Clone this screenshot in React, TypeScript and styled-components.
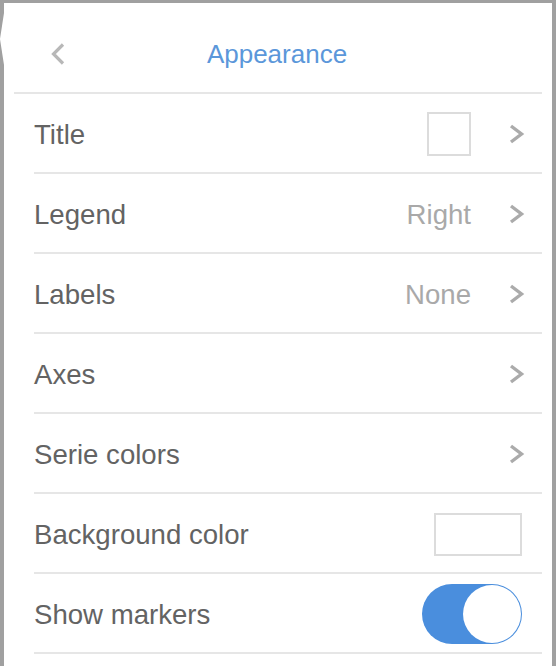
import React from "react";
import styled, { createGlobalStyle } from "styled-components";

const Global = createGlobalStyle`
  html, body { margin: 0; padding: 0; }
  body {
    background: #a0a0a0;
    font-family: "Liberation Sans", Arial, Helvetica, sans-serif;
    overflow: hidden;
  }
`;

const Page = styled.div`
  width: 556px;
  height: 666px;
  padding: 3px 4px 0 4px;
  box-sizing: border-box;
`;

const Panel = styled.div`
  position: relative;
  width: 548px;
  height: 663px;
  background: #fff;
  display: flex;
  flex-direction: column;
`;

const Arrow = styled.div`
  position: absolute;
  left: -4px;
  top: 10px;
  width: 0;
  height: 0;
  border-top: 26px solid transparent;
  border-bottom: 26px solid transparent;
  border-right: 4px solid #fff;
`;

const Header = styled.div`
  height: 89px;
  margin: 0 10px;
  border-bottom: 2px solid #e6e6e6;
  display: flex;
  align-items: center;
  justify-content: center;
  position: relative;
`;

const BackButton = styled.div`
  position: absolute;
  left: 36px;
  top: 39px;
  width: 16px;
  height: 24px;
  display: flex;
  align-items: center;
  justify-content: center;
`;

const HeaderTitle = styled.div`
  font-size: 26px;
  color: #5b97da;
  margin-top: 14px;
  margin-right: 2px;
`;

const List = styled.div`
  display: flex;
  flex-direction: column;
  margin: 0 10px 0 30px;
`;

const Row = styled.div<{ $pr?: number }>`
  height: 78px;
  border-bottom: 2px solid #e6e6e6;
  display: flex;
  align-items: center;
  padding-right: ${(p) => p.$pr ?? 17}px;
`;

const Label = styled.div`
  flex: 1;
  font-size: 27.6px;
  color: #636363;
  padding-top: 4px;
`;

const Value = styled.div`
  font-size: 27.6px;
  color: #a9a9a9;
  padding-top: 4px;
`;

const Chevron = styled.div`
  width: 17px;
  height: 20px;
  margin-left: 37px;
  display: flex;
  align-items: center;
  justify-content: center;
  margin-top: 2px;
`;

const Swatch = styled.div<{ $w: number; $h: number }>`
  width: ${(p) => p.$w}px;
  height: ${(p) => p.$h}px;
  box-sizing: border-box;
  border: 2px solid #dcdcdc;
  background: #fff;
  margin-top: 2px;
`;

const Toggle = styled.div`
  width: 100px;
  height: 60px;
  border-radius: 30px;
  background: #4a8edd;
  display: flex;
  align-items: center;
  justify-content: flex-end;
  padding: 1px;
  box-sizing: border-box;
  margin-top: 2px;
`;

const Knob = styled.div`
  width: 58px;
  height: 58px;
  border-radius: 50%;
  background: #fff;
`;

const RightChevron = () => (
  <svg width="17" height="20" viewBox="0 0 17 20">
    <path d="M3 2 L13.5 10 L3 18" fill="none" stroke="#ababab" strokeWidth="3.4" />
  </svg>
);

const LeftChevron = () => (
  <svg width="16" height="24" viewBox="0 0 16 24">
    <path d="M13 2.5 L3.5 12 L13 21.5" fill="none" stroke="#b8b8b8" strokeWidth="3.2" />
  </svg>
);

export default function App() {
  return (
    <>
      <Global />
      <Page>
        <Panel>
          <Arrow />
          <Header>
            <BackButton>
              <LeftChevron />
            </BackButton>
            <HeaderTitle>Appearance</HeaderTitle>
          </Header>
          <List>
            <Row>
              <Label>Title</Label>
              <Swatch $w={44} $h={44} />
              <Chevron>
                <RightChevron />
              </Chevron>
            </Row>
            <Row>
              <Label>Legend</Label>
              <Value>Right</Value>
              <Chevron>
                <RightChevron />
              </Chevron>
            </Row>
            <Row>
              <Label>Labels</Label>
              <Value>None</Value>
              <Chevron>
                <RightChevron />
              </Chevron>
            </Row>
            <Row>
              <Label>Axes</Label>
              <Chevron>
                <RightChevron />
              </Chevron>
            </Row>
            <Row>
              <Label>Serie colors</Label>
              <Chevron>
                <RightChevron />
              </Chevron>
            </Row>
            <Row $pr={20}>
              <Label>Background color</Label>
              <Swatch $w={88} $h={43} />
            </Row>
            <Row $pr={20}>
              <Label>Show markers</Label>
              <Toggle>
                <Knob />
              </Toggle>
            </Row>
          </List>
        </Panel>
      </Page>
    </>
  );
}
